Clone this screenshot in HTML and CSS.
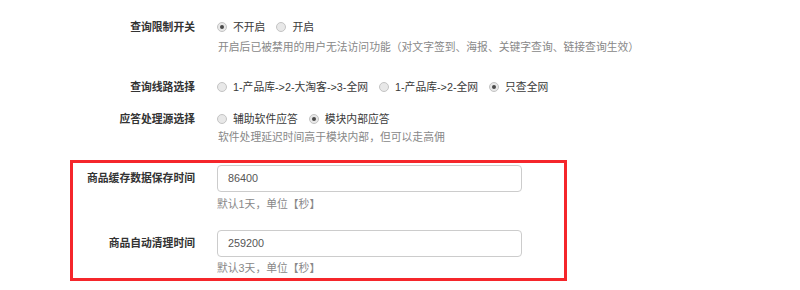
FILE: index.html
```html
<!DOCTYPE html>
<html lang="zh-CN">
<head>
<meta charset="utf-8">
<link rel="stylesheet" href="styles.css">
</head>
<body>
<div class="form">
  <div class="row row-first">
    <div class="label">查询限制开关</div>
    <div class="ctrl">
      <div class="radios">
        <span class="opt"><span class="radio checked"></span>不开启</span>
        <span class="opt"><span class="radio"></span>开启</span>
      </div>
      <div class="help help-a">开启后已被禁用的用户无法访问功能（对文字签到、海报、关键字查询、链接查询生效）</div>
    </div>
  </div>
  <div class="row row-second">
    <div class="label">查询线路选择</div>
    <div class="ctrl">
      <div class="radios">
        <span class="opt"><span class="radio"></span>1-产品库-&gt;2-大淘客-&gt;3-全网</span>
        <span class="opt"><span class="radio"></span>1-产品库-&gt;2-全网</span>
        <span class="opt"><span class="radio checked"></span>只查全网</span>
      </div>
    </div>
  </div>
  <div class="row row-third">
    <div class="label">应答处理源选择</div>
    <div class="ctrl">
      <div class="radios">
        <span class="opt"><span class="radio"></span>辅助软件应答</span>
        <span class="opt"><span class="radio checked"></span>模块内部应答</span>
      </div>
      <div class="help help-b">软件处理延迟时间高于模块内部，但可以走高佣</div>
    </div>
  </div>
  <div class="highlight">
    <div class="row box-row">
      <div class="label">商品缓存数据保存时间</div>
      <div class="ctrl">
        <div class="input">86400</div>
        <div class="help help-c">默认1天，单位【秒】</div>
      </div>
    </div>
    <div class="row box-row box-row-2">
      <div class="label">商品自动清理时间</div>
      <div class="ctrl">
        <div class="input">259200</div>
        <div class="help help-d">默认3天，单位【秒】</div>
      </div>
    </div>
  </div>
</div>
</body>
</html>
```

FILE: styles.css
```css
html, body {
  margin: 0;
  padding: 0;
  background: #ffffff;
}

body {
  font-family: "Liberation Sans", "Noto Sans CJK SC", sans-serif;
  font-size: 10.8px;
  line-height: 16px;
  color: #333333;
  width: 800px;
  height: 290px;
  overflow: hidden;
}

.form {
  padding-top: 19px;
}

.row {
  display: grid;
  grid-template-columns: 195px 1fr;
  column-gap: 23px;
  align-items: start;
}

.row-second {
  margin-top: 24px;
}

.row-third {
  margin-top: 16px;
}

.label {
  text-align: right;
  font-weight: bold;
  color: #333333;
}

.radios {
  display: flex;
  align-items: center;
  column-gap: 12px;
  color: #3a3a3a;
}

.opt {
  display: inline-flex;
  align-items: center;
  column-gap: 6px;
}

.radio {
  box-sizing: border-box;
  width: 10px;
  height: 10px;
  border-radius: 50%;
  border: 1px solid #c4c4c4;
  background: #e8e8e8;
  display: inline-flex;
  align-items: center;
  justify-content: center;
  margin-left: -1px;
}

.radio.checked::after {
  content: "";
  width: 4px;
  height: 4px;
  border-radius: 50%;
  background: #4a4a4a;
}

.help {
  color: #888888;
}

.help-a {
  margin-top: 4px;
}

.help-b {
  margin-top: 2px;
}

.highlight {
  margin-top: 15px;
  margin-left: 70px;
  width: 497px;
  box-sizing: border-box;
  border: 3px solid #f5262b;
  padding: 2px 0 2px 0;
}

.box-row {
  grid-template-columns: 122px 1fr;
  column-gap: 22px;
  align-items: start;
}

.box-row .label {
  line-height: 27px;
}

.box-row-2 {
  margin-top: 18px;
}

.input {
  box-sizing: border-box;
  width: 305px;
  height: 27px;
  border: 1px solid #cccccc;
  border-radius: 4px;
  padding-left: 10px;
  line-height: 25px;
  color: #555555;
  background: #ffffff;
}

.help-c {
  margin-top: 4px;
}

.help-d {
  margin-top: 3px;
}
```
